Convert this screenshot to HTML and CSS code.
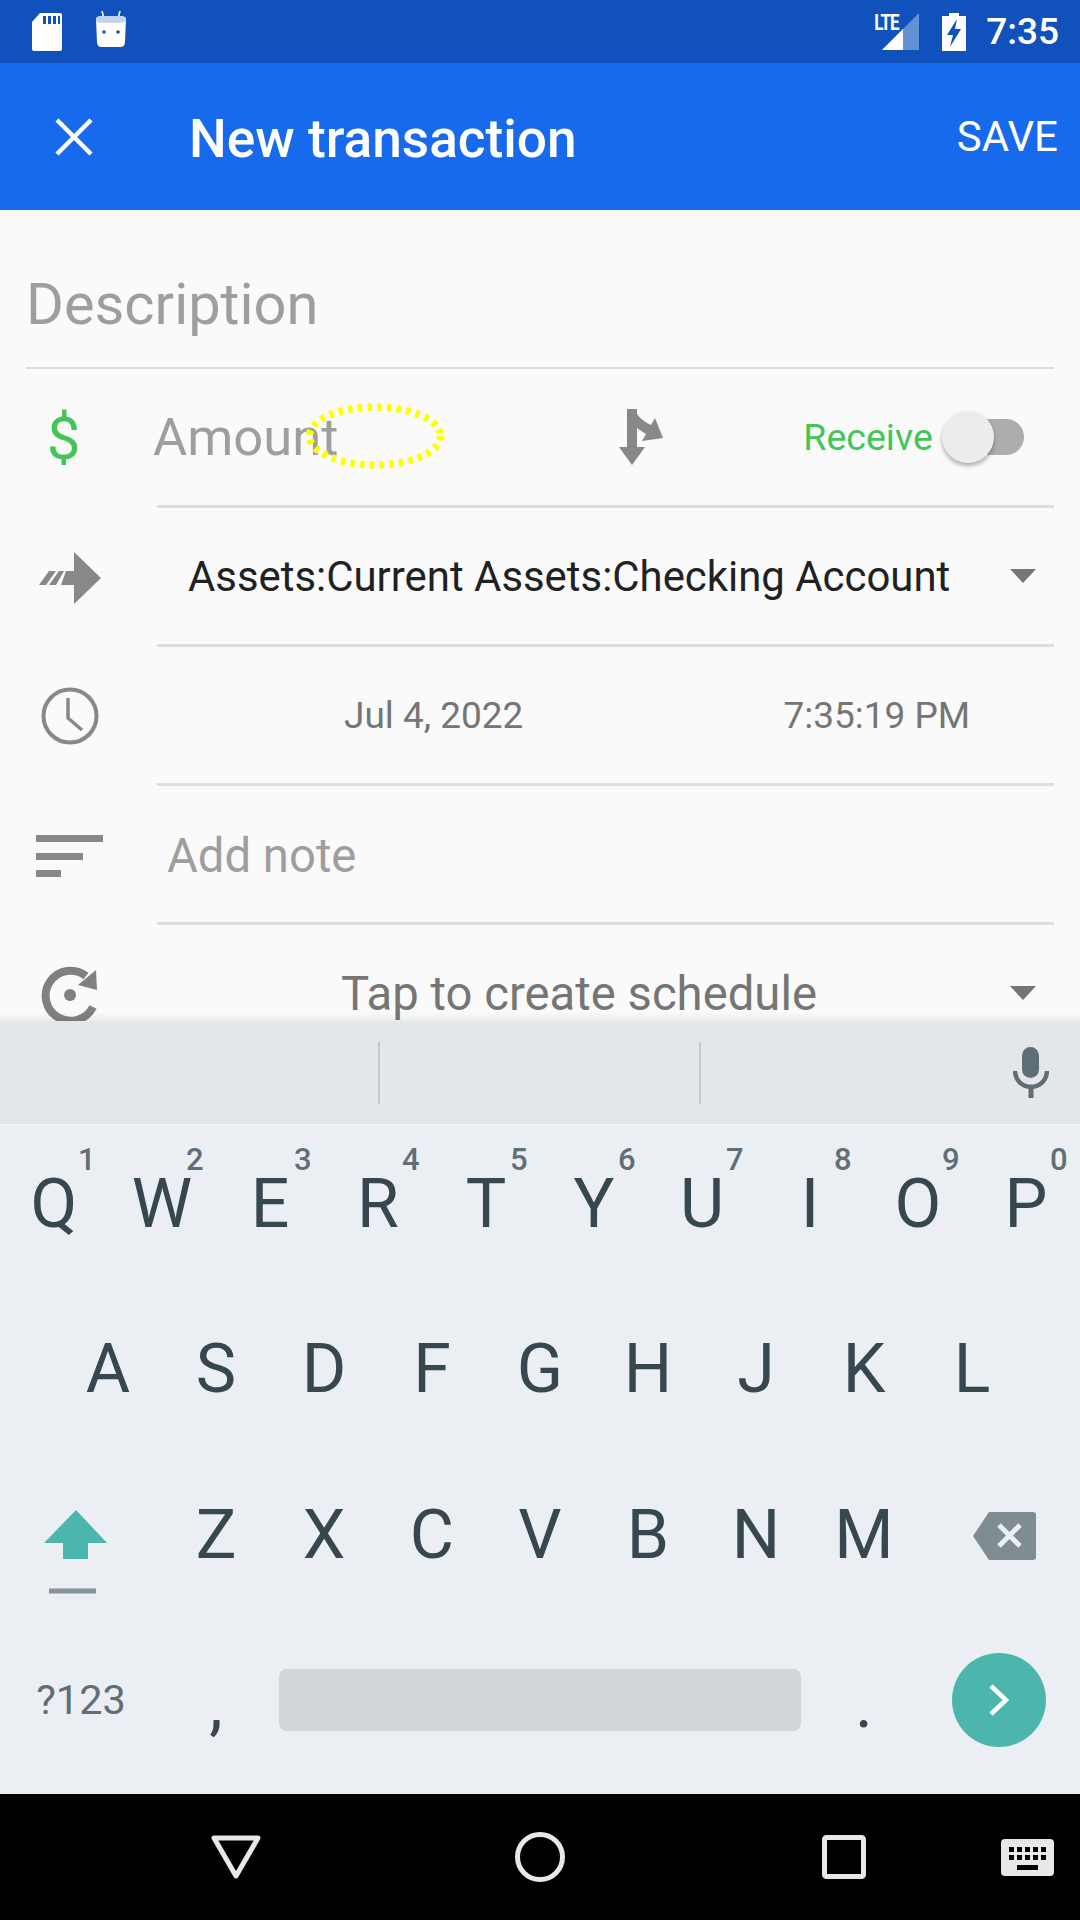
FILE: index.html
```html
<!DOCTYPE html>
<html lang="en">
<head>
    <meta charset="UTF-8">
    <meta name="viewport" content="width=device-width, initial-scale=1.0">
    <title>New transaction</title>
    <link rel="stylesheet" href="styles.css">
</head>
<body>

<div class="screen">

    <div class="status-bar">
        <svg class="status-sd" width="32" height="38" viewBox="0 0 32 38">
            <path d="M9 0H29Q31 0 31 2V36Q31 38 29 38H3Q1 38 1 36V9Z" fill="#fff"/>
            <path d="M12 3H15V11H12ZM17 3H20V11H17ZM22 3H25V11H22ZM27 3H29V11H27Z" fill="#1051bb"/>
        </svg>
        <svg class="status-bot" width="32" height="38" viewBox="0 0 32 38">
            <path d="M7 0L8.5 6M25 0L23.5 6" stroke="#fff" stroke-width="1.6" fill="none"/>
            <path d="M1 8Q1 5 8 5H24Q31 5 31 8L30 31Q30 36 25 36H7Q2 36 2 31Z" fill="#fff"/>
            <path d="M1 8Q1 5 8 5H24Q31 5 31 8V9Q31 12 24 12H8Q1 12 1 9Z" fill="#c3d3ee"/>
            <circle cx="9" cy="21" r="1.8" fill="#1051bb"/>
            <circle cx="23" cy="21" r="1.8" fill="#1051bb"/>
        </svg>
        <span class="status-lte">LTE</span>
        <svg class="status-signal" width="38" height="38" viewBox="0 0 38 38">
            <path d="M0 37L37 0V37Z" fill="#6391d6"/>
            <path d="M0 37L21 16V37Z" fill="#fff"/>
        </svg>
        <svg class="status-battery" width="24" height="38" viewBox="0 0 24 38">
            <path d="M7 0H17V3H24V38H0V3H7Z" fill="#fff"/>
            <path d="M15 6L5 22H11L8 34L19 16H13Z" fill="#1051bb"/>
        </svg>
        <span class="status-time">7:35</span>
    </div>

    <div class="app-bar">
        <svg class="close-icon" width="38" height="38" viewBox="0 0 38 38">
            <path d="M2 2L36 36M36 2L2 36" stroke="#fff" stroke-width="4.5" fill="none"/>
        </svg>
        <h1 class="app-title">New transaction</h1>
        <span class="app-save">SAVE</span>
    </div>

    <div class="form">
        <div class="description">Description</div>

        <div class="row">
            <div class="row-icon"><span class="dollar">$</span></div>
            <div class="row-body amount-body">
                <span class="amount">Amount</span>
                <svg class="split-icon" width="44" height="56" viewBox="618 409 44 56">
                    <path d="M626 409H636V414Q641 421 650 425L654 418L662 438L641 441L645 434Q640 431 636 428V447H644L631 465L618 447H626Z" fill="#888"/>
                </svg>
                <span class="receive">Receive</span>
                <div class="switch"><div class="switch-thumb"></div></div>
            </div>
        </div>

        <div class="row">
            <div class="row-icon">
                <svg width="62" height="52" viewBox="0 0 62 52">
                    <path d="M35 0L62 26L35 52V33H22L27 19H35Z" fill="#888"/>
                    <path d="M0 33L10 19H17L7 33ZM10 33L20 19H25L17 33Z" fill="#888"/>
                </svg>
            </div>
            <div class="row-body account-body">
                <span class="account">Assets:Current Assets:Checking Account</span>
                <span class="caret"></span>
            </div>
        </div>

        <div class="row">
            <div class="row-icon clock-icon">
                <svg width="58" height="58" viewBox="0 0 58 58">
                    <circle cx="29" cy="29" r="26.5" stroke="#888" stroke-width="4" fill="none"/>
                    <path d="M27 11V31L41 43" stroke="#888" stroke-width="3.5" fill="none"/>
                </svg>
            </div>
            <div class="row-body date-body">
                <span class="date">Jul 4, 2022</span>
                <span class="time">7:35:19 PM</span>
            </div>
        </div>

        <div class="row">
            <div class="row-icon">
                <svg width="68" height="42" viewBox="0 0 68 42">
                    <path d="M0 0H67V7H0ZM0 18H47V25H0ZM0 35H25V42H0Z" fill="#888"/>
                </svg>
            </div>
            <div class="row-body note-body"><span class="note">Add note</span></div>
        </div>

        <div class="row">
            <div class="row-icon schedule-icon">
                <svg width="60" height="60" viewBox="0 0 60 60">
                    <path d="M53 42A25 25 0 1 1 46 11" stroke="#808080" stroke-width="8" fill="none"/>
                    <path d="M56 5L57 25L38 20Z" fill="#808080"/>
                    <circle cx="30" cy="30" r="6" fill="#808080"/>
                </svg>
            </div>
            <div class="row-body schedule-body">
                <span class="schedule">Tap to create schedule</span>
                <span class="caret"></span>
            </div>
        </div>

        <svg class="tap-mark" width="140" height="66" viewBox="0 0 140 66">
            <ellipse cx="70" cy="33" rx="65.5" ry="29" stroke="#ffff00" stroke-width="7.5" stroke-dasharray="4.5 5.2" fill="none"/>
        </svg>
    </div>

    <div class="keyboard">
        <div class="suggestions">
            <div class="suggest suggest-left"></div>
            <div class="suggest suggest-mid"></div>
            <svg class="mic" width="36" height="52" viewBox="0 0 36 52">
                <rect x="9" y="0" width="17" height="31" rx="8.5" fill="#5f6d75"/>
                <path d="M2 24C3 45 33 45 34 24" stroke="#5f6d75" stroke-width="4.5" fill="none"/>
                <path d="M18 38V51" stroke="#5f6d75" stroke-width="5" fill="none"/>
            </svg>
        </div>

        <div class="key-row key-row-1">
            <div class="key">Q<span class="hint">1</span></div>
            <div class="key">W<span class="hint">2</span></div>
            <div class="key">E<span class="hint">3</span></div>
            <div class="key">R<span class="hint">4</span></div>
            <div class="key">T<span class="hint">5</span></div>
            <div class="key">Y<span class="hint">6</span></div>
            <div class="key">U<span class="hint">7</span></div>
            <div class="key">I<span class="hint">8</span></div>
            <div class="key">O<span class="hint">9</span></div>
            <div class="key">P<span class="hint">0</span></div>
        </div>

        <div class="key-row key-row-2">
            <div class="key">A</div>
            <div class="key">S</div>
            <div class="key">D</div>
            <div class="key">F</div>
            <div class="key">G</div>
            <div class="key">H</div>
            <div class="key">J</div>
            <div class="key">K</div>
            <div class="key">L</div>
        </div>

        <div class="key-row key-row-3">
            <div class="key key-wide shift-key">
                <svg width="64" height="86" viewBox="0 0 64 86">
                    <path d="M32 0L63 33H44V49H19V33H0Z" fill="#4db6ac"/>
                    <path d="M5 81H52" stroke="#87939a" stroke-width="5" fill="none"/>
                </svg>
            </div>
            <div class="key">Z</div>
            <div class="key">X</div>
            <div class="key">C</div>
            <div class="key">V</div>
            <div class="key">B</div>
            <div class="key">N</div>
            <div class="key">M</div>
            <div class="key key-wide back-key">
                <svg width="64" height="48" viewBox="0 0 64 48">
                    <path d="M16 0H60Q63 0 63 3V45Q63 48 60 48H16L0 24Z" fill="#7f8c91"/>
                    <path d="M26 13L47 34M47 13L26 34" stroke="#ebeff3" stroke-width="5" fill="none"/>
                </svg>
            </div>
        </div>

        <div class="key-row key-row-4">
            <div class="key key-wide symbols-key">?123</div>
            <div class="key comma-key">,</div>
            <div class="space-bar"></div>
            <div class="key period-key">.</div>
            <div class="key key-wide go-key">
                <div class="go-button">
                    <svg width="20" height="32" viewBox="0 0 20 32">
                        <path d="M2 2L17 16L2 30" stroke="#fff" stroke-width="4.5" fill="none"/>
                    </svg>
                </div>
            </div>
        </div>
    </div>

    <div class="nav-bar">
        <svg class="nav-back" width="50" height="44" viewBox="0 0 50 44">
            <path d="M3 3H47L25 41Z" stroke="#e8e8e8" stroke-width="5" stroke-linejoin="round" fill="none"/>
        </svg>
        <svg class="nav-home" width="50" height="50" viewBox="0 0 50 50">
            <circle cx="25" cy="25" r="22.5" stroke="#e8e8e8" stroke-width="5" fill="none"/>
        </svg>
        <svg class="nav-recent" width="44" height="44" viewBox="0 0 44 44">
            <rect x="2.5" y="2.5" width="39" height="39" rx="2" stroke="#e8e8e8" stroke-width="5" fill="none"/>
        </svg>
        <svg class="nav-keyboard" width="53" height="37" viewBox="0 0 53 37">
            <rect width="53" height="37" rx="4" fill="#e8e8e8"/>
            <path d="M8 8H13V13H8ZM16 8H21V13H16ZM24 8H29V13H24ZM32 8H37V13H32ZM40 8H45V13H40ZM8 16H13V21H8ZM16 16H21V21H16ZM24 16H29V21H24ZM32 16H37V21H32ZM40 16H45V21H40ZM16 26H37V31H16Z" fill="#000"/>
        </svg>
    </div>

</div>

</body>
</html>
```

FILE: styles.css
```css
body {
    margin: 0;
    font-family: Roboto, "Liberation Sans", sans-serif;
    background-color: #000;
}

.screen {
    width: 1080px;
    height: 1920px;
    display: flex;
    flex-direction: column;
    overflow: hidden;
}

/* status bar */
.status-bar {
    height: 63px;
    flex: none;
    background-color: #1051bb;
    display: flex;
    align-items: center;
    color: #fff;
}
.status-sd { margin-left: 31px; }
.status-bot { margin-left: 32px; margin-top: -4px; }
.status-lte {
    margin-left: auto;
    margin-top: -19px;
    width: 24px;
    font-size: 17px;
    font-weight: 700;
    letter-spacing: -1px;
    transform: scaleY(1.25);
}
.status-signal { margin-left: -16px; }
.status-battery { margin-left: 22px; }
.status-time {
    margin-left: 20px;
    margin-right: 21px;
    font-size: 37px;
    font-weight: 500;
}

/* app bar */
.app-bar {
    height: 147px;
    flex: none;
    background-color: #166aeb;
    display: flex;
    align-items: center;
    color: #fff;
}
.close-icon { margin-left: 55px; }
.app-title {
    margin: 4px 0 0 96px;
    font-size: 53.2px;
    font-weight: 500;
}
.app-save {
    margin-left: auto;
    margin-right: 22px;
    font-size: 42px;
    font-weight: 400;
}

/* form */
.form {
    height: 811px;
    flex: none;
    position: relative;
    overflow: hidden;
    background-color: #fafafa;
}
.form::after {
    content: "";
    position: absolute;
    left: 0;
    right: 0;
    bottom: 0;
    height: 10px;
    background: linear-gradient(rgba(0, 0, 0, 0), rgba(0, 0, 0, 0.05));
}
.description {
    height: 127px;
    margin: 0 26px;
    padding-top: 30px;
    border-bottom: 2px solid #dcdcdc;
    display: flex;
    align-items: center;
    font-size: 57.75px;
    color: #9e9e9e;
}
.row {
    height: 139px;
    display: flex;
}
.row-icon {
    width: 140px;
    margin-right: 17px;
    flex: none;
    display: flex;
    align-items: center;
    justify-content: center;
}
.clock-icon { padding-bottom: 2px; }
.row-body {
    flex: 1;
    margin-right: 26px;
    border-bottom: 3px solid #dedede;
    display: flex;
    align-items: center;
}
.dollar {
    margin-right: 13px;
    font-size: 60px;
    color: #43c558;
}
.amount {
    margin-left: -4px;
    font-size: 52.5px;
    color: #9e9e9e;
}
.split-icon { margin-left: 281px; }
.receive {
    margin-left: 140px;
    font-size: 37.5px;
    color: #43c558;
}
.switch {
    margin-left: 29px;
    width: 62px;
    height: 36px;
    position: relative;
    border-radius: 18px;
    background-color: #adadad;
}
.switch-thumb {
    position: absolute;
    left: -20px;
    top: -8px;
    width: 52px;
    height: 52px;
    border-radius: 50%;
    background-color: #ececec;
    box-shadow: 0 3px 4px rgba(0, 0, 0, 0.3);
}
.account-body {
    padding-left: 31px;
    justify-content: space-between;
    padding-right: 18px;
}
.account {
    font-size: 41.9px;
    color: #212121;
}
.caret {
    width: 0;
    height: 0;
    border-left: 13px solid transparent;
    border-right: 13px solid transparent;
    border-top: 14px solid #757575;
}
.date-body { font-size: 37px; color: #757575; }
.date { margin-left: 187px; }
.time { margin-left: 260px; }
.note-body { padding-left: 10px; }
.note {
    padding-top: 4px;
    font-size: 47.25px;
    color: #9e9e9e;
}
.schedule-body {
    justify-content: space-between;
    padding-left: 184px;
    padding-right: 18px;
}
.schedule {
    padding-top: 3px;
    font-size: 47.25px;
    line-height: 1;
    color: #757575;
}
.tap-mark {
    position: absolute;
    left: 305px;
    top: 193px;
}

/* keyboard */
.keyboard {
    flex: 1;
    background-color: #ebeff3;
    display: flex;
    flex-direction: column;
}
.suggestions {
    height: 103px;
    flex: none;
    background-color: #e3e7ea;
    border-bottom: 2px solid #f1f4f6;
    display: flex;
    align-items: center;
}
.suggest {
    height: 62px;
    border-right: 2px solid #c5cace;
}
.suggest-left { width: 378px; }
.suggest-mid { width: 319px; }
.mic { margin-left: 312px; }
.key-row {
    display: flex;
    align-items: center;
    justify-content: center;
}
.key-row-1 { height: 158px; }
.key-row-2 { height: 172px; }
.key-row-3 { height: 160px; }
.key-row-4 {
    height: 168px;
    justify-content: flex-start;
}
.key {
    width: 108px;
    height: 100%;
    flex: none;
    position: relative;
    display: flex;
    align-items: center;
    justify-content: center;
    font-size: 68px;
    line-height: 0.7;
    color: #37474f;
}
.hint {
    position: absolute;
    left: 78px;
    top: 22px;
    font-size: 31px;
    font-weight: 500;
    line-height: 0.8;
    color: #5f6f77;
}
.key-wide { width: 162px; }
.shift-key {
    box-sizing: border-box;
    padding-right: 10px;
    padding-top: 33px;
}
.back-key {
    box-sizing: border-box;
    padding-left: 12px;
}
.symbols-key {
    font-size: 41.5px;
    color: #5f6f77;
}
.comma-key, .period-key { padding-top: 10px; box-sizing: border-box; }
.space-bar {
    width: 522px;
    height: 62px;
    margin: 0 9px;
    border-radius: 8px;
    background-color: #d1d6d9;
}
.go-button {
    width: 94px;
    height: 94px;
    border-radius: 50%;
    background-color: #4db6ac;
    display: flex;
    align-items: center;
    justify-content: center;
}

/* navigation bar */
.nav-bar {
    height: 126px;
    flex: none;
    background-color: #000;
    display: flex;
    align-items: center;
}
.nav-back { margin-left: 211px; }
.nav-home { margin-left: 254px; }
.nav-recent { margin-left: 257px; }
.nav-keyboard { margin-left: 135px; }
```
